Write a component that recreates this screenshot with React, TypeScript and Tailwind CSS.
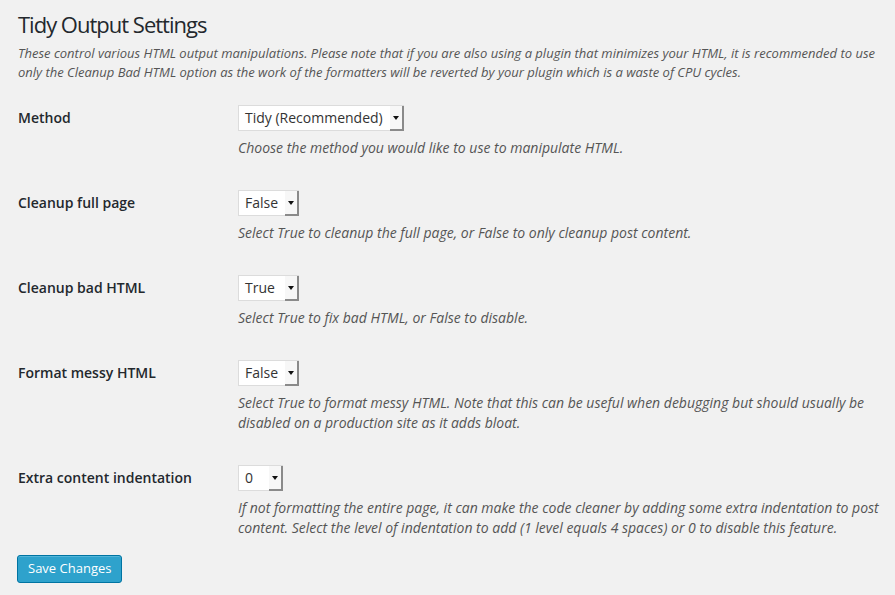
import React from 'react';

type Setting = {
  label: string;
  value: string;
  width: string;
  description: string;
};

const settings: Setting[] = [
  {
    label: 'Method',
    value: 'Tidy (Recommended)',
    width: 'w-[166px]',
    description: 'Choose the method you would like to use to manipulate HTML.',
  },
  {
    label: 'Cleanup full page',
    value: 'False',
    width: 'w-[61px]',
    description: 'Select True to cleanup the full page, or False to only cleanup post content.',
  },
  {
    label: 'Cleanup bad HTML',
    value: 'True',
    width: 'w-[61px]',
    description: 'Select True to fix bad HTML, or False to disable.',
  },
  {
    label: 'Format messy HTML',
    value: 'False',
    width: 'w-[61px]',
    description:
      'Select True to format messy HTML. Note that this can be useful when debugging but should usually be disabled on a production site as it adds bloat.',
  },
  {
    label: 'Extra content indentation',
    value: '0',
    width: 'w-[45px]',
    description:
      'If not formatting the entire page, it can make the code cleaner by adding some extra indentation to post content. Select the level of indentation to add (1 level equals 4 spaces) or 0 to disable this feature.',
  },
];

const FakeSelect: React.FC<{ value: string; width: string }> = ({ value, width }) => (
  <div className={`${width} h-[26px] flex items-stretch bg-white border border-[#dcdcdc]`}>
    <span className="flex-1 pl-[6px] text-[14px] leading-[24px] text-[#333] whitespace-nowrap">{value}</span>
    {/* arrow box */}
    <span className="w-[14px] flex items-center justify-center bg-[#f7f7f7] border-r-2 border-b-2 border-[#8a8a8a] -mr-px -mb-px">
      <svg width="6" height="4" viewBox="0 0 6 4">
        <path d="M0 0 H6 L3 4 Z" fill="#111" />
      </svg>
    </span>
  </div>
);

export default function App() {
  return (
    <div className="min-h-screen bg-[#f1f1f1] pl-[18px] pr-[14px] pt-[10px] font-['Open_Sans',sans-serif]">
      <h2 className="text-[22px] leading-[29px] tracking-[-1px] text-[#23282d]">Tidy Output Settings</h2>
      <p className="mt-[5px] pr-[4px] text-[13px] leading-[19px] italic text-[#555]">
        These control various HTML output manipulations. Please note that if you are also using a plugin that minimizes your HTML, it is recommended to use only the Cleanup Bad HTML option as the work of the formatters will be reverted by your plugin which is a waste of CPU cycles.
      </p>

      <div className="mt-[23px] flex flex-col gap-[32px]">
        {settings.map((s) => (
          <div key={s.label} className="flex">
            <div className="w-[220px] shrink-0 text-[14px] leading-[26px] font-semibold text-[#23282d]">
              {s.label}
            </div>
            <div className="flex-1">
              <FakeSelect value={s.value} width={s.width} />
              <p className="mt-[7px] text-[14px] leading-[20px] italic text-[#555]">{s.description}</p>
            </div>
          </div>
        ))}
      </div>

      <button className="mt-[17px] -ml-px h-[28px] px-[10px] rounded-[3px] bg-[#2ea2cc] border border-[#0074a2] text-white text-[13px] shadow-[inset_0_1px_0_rgba(120,200,230,0.5)]">
        Save Changes
      </button>
    </div>
  );
}
